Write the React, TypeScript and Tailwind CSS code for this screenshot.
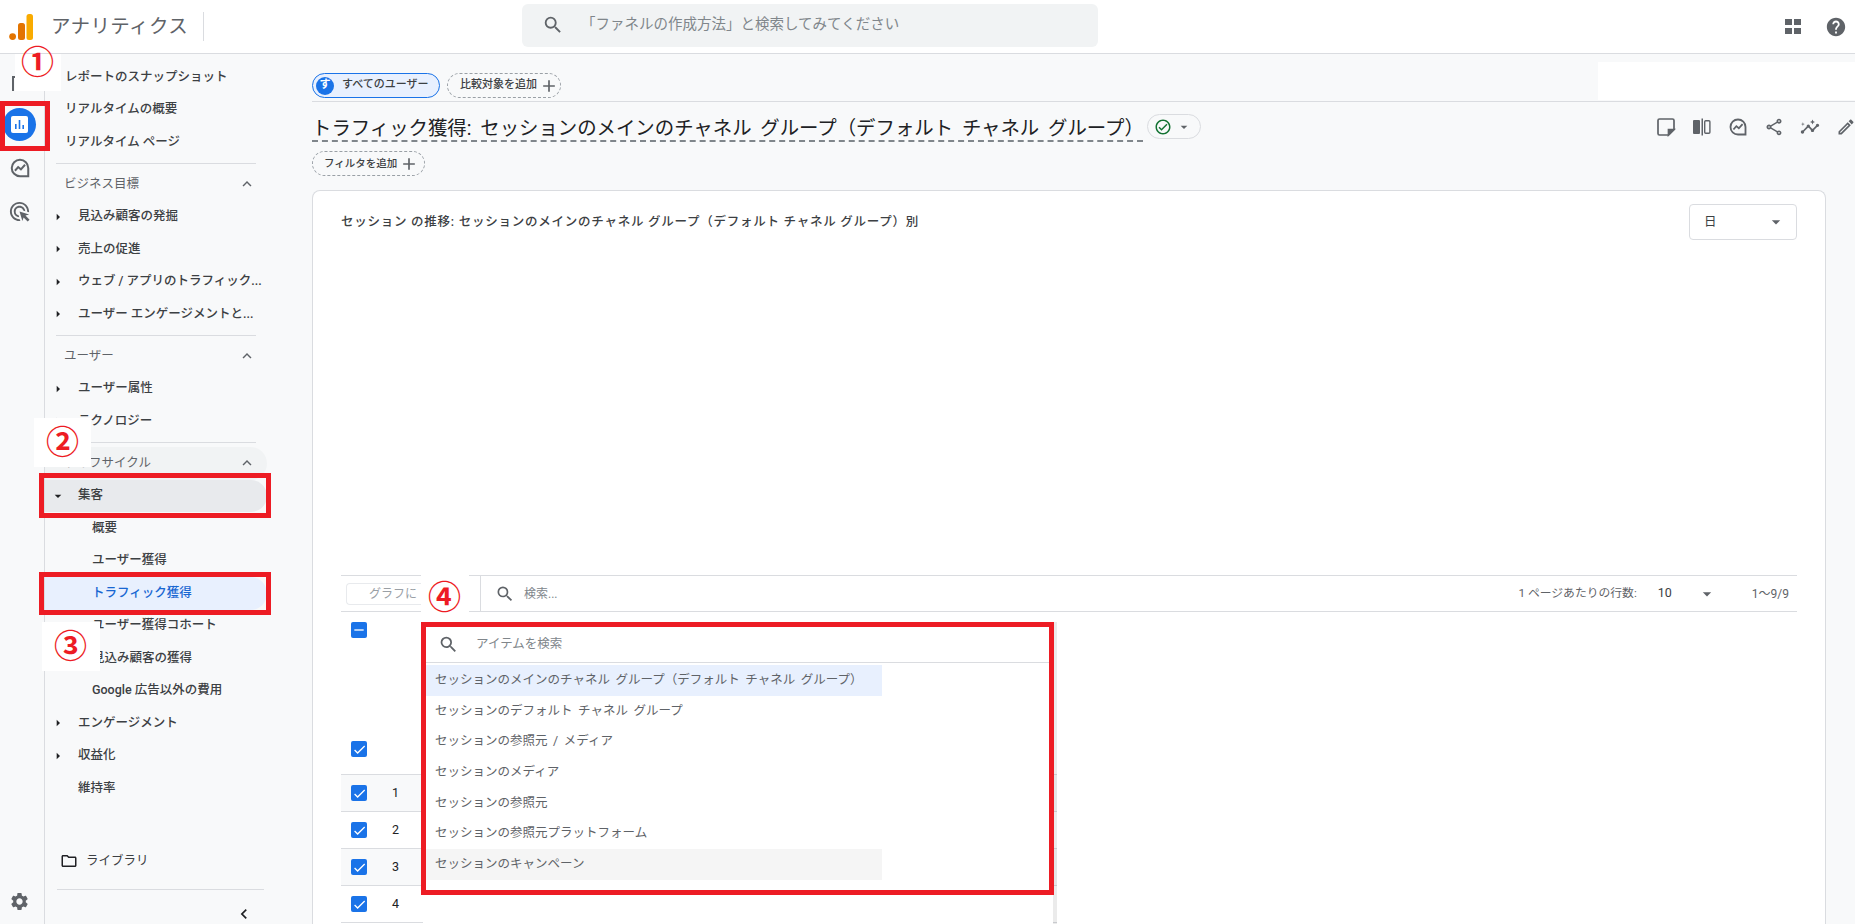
import React from "react";
import {
    MdAdd,
    MdArrowDropDown,
    MdArrowRight,
    MdCheck,
    MdChevronLeft,
    MdExpandLess,
    MdHelp,
    MdOutlineAdsClick,
    MdOutlineCheckCircle,
    MdOutlineEdit,
    MdOutlineFolder,
    MdOutlineInsights,
    MdOutlineShare,
    MdRemove,
    MdSearch,
    MdSettings,
} from "react-icons/md";

const FONT = "[font-family:Roboto,'Noto_Sans_CJK_JP',sans-serif]";

const dropdownItems = [
    "セッションのメインのチャネル グループ（デフォルト チャネル グループ）",
    "セッションのデフォルト チャネル グループ",
    "セッションの参照元 / メディア",
    "セッションのメディア",
    "セッションの参照元",
    "セッションの参照元プラットフォーム",
    "セッションのキャンペーン",
];

function ExploreIcon({ size = 20 }: { size?: number }) {
    return (
        <svg width={size} height={size} viewBox="0 0 24 24" fill="none" stroke="#5f6368" strokeWidth="2.2">
            <path d="M12 3a9 9 0 1 0 0 18h9v-9a9 9 0 0 0-9-9Z" />
            <path d="M6.5 15l3.5-4 3 2.5 4.5-5" />
        </svg>
    );
}

function SideRow({ label, arrow, indent = "pl-[20px]" }: { label: string; arrow?: "right" | "down"; indent?: string }) {
    return (
        <div className={`relative flex h-[32.5px] items-center text-[12.5px] font-medium text-[#3c4043] whitespace-nowrap ${indent}`}>
            {arrow === "right" && <MdArrowRight className="absolute left-[5px] text-[#202124]" size={16} />}
            {arrow === "down" && <MdArrowDropDown className="absolute left-[5px] text-[#202124]" size={16} />}
            {label}
        </div>
    );
}

function SectionHeader({ label, hover }: { label: string; hover?: boolean }) {
    return (
        <div className={`flex h-[32.5px] items-center justify-between pl-[19px] pr-[11px] text-[12.5px] font-normal text-[#5f6368] rounded-r-full ${hover ? "bg-[#f1f3f4]" : ""}`}>
            <span>{label}</span>
            <MdExpandLess size={18} className="text-[#5f6368]" />
        </div>
    );
}

function Divider() {
    return <div className="my-[4.25px] ml-[11px] mr-[11px] h-px bg-[#dadce0]" />;
}

function Sidebar() {
    return (
        <aside className="relative flex w-[267px] shrink-0 flex-col pt-[7px]">
            <div className="w-[222px]">
                <SideRow label="レポートのスナップショット" />
                <SideRow label="リアルタイムの概要" />
                <SideRow label="リアルタイム ページ" />
                <Divider />
                <SectionHeader label="ビジネス目標" />
                <SideRow label="見込み顧客の発掘" arrow="right" indent="pl-[33px]" />
                <SideRow label="売上の促進" arrow="right" indent="pl-[33px]" />
                <SideRow label="ウェブ / アプリのトラフィック..." arrow="right" indent="pl-[33px]" />
                <SideRow label="ユーザー エンゲージメントと..." arrow="right" indent="pl-[33px]" />
                <Divider />
                <SectionHeader label="ユーザー" />
                <SideRow label="ユーザー属性" arrow="right" indent="pl-[33px]" />
                <SideRow label="テクノロジー" arrow="right" indent="pl-[33px]" />
                <Divider />
                <SectionHeader label="ライフサイクル" hover />
                <div className="rounded-r-full bg-[#e8eaed]">
                    <SideRow label="集客" arrow="down" indent="pl-[33px]" />
                </div>
                <SideRow label="概要" indent="pl-[47px]" />
                <SideRow label="ユーザー獲得" indent="pl-[47px]" />
                <div className="rounded-r-full bg-[#e8f0fe] [&>div]:text-[#1967d2]">
                    <SideRow label="トラフィック獲得" indent="pl-[47px]" />
                </div>
                <SideRow label="ユーザー獲得コホート" indent="pl-[47px]" />
                <SideRow label="見込み顧客の獲得" indent="pl-[47px]" />
                <SideRow label="Google 広告以外の費用" indent="pl-[47px]" />
                <SideRow label="エンゲージメント" arrow="right" indent="pl-[33px]" />
                <SideRow label="収益化" arrow="right" indent="pl-[33px]" />
                <SideRow label="維持率" indent="pl-[33px]" />
            </div>
            <div className="mt-[46px] flex h-[30px] w-[222px] items-center gap-[8px] pl-[15px] text-[12.5px] font-normal text-[#3c4043]">
                <MdOutlineFolder size={18} className="text-[#202124]" />
                <span>ライブラリ</span>
            </div>
            <div className="ml-[12px] mt-[18px] h-px w-[207px] bg-[#dadce0]" />
            <div className="ml-[189px] mt-[14px]">
                <MdChevronLeft size={20} className="text-[#202124]" />
            </div>
        </aside>
    );
}

function Check({ kind = "check" }: { kind?: "check" | "minus" }) {
    return (
        <div className="flex h-4 w-4 items-center justify-center rounded-[2px] bg-[#1a73e8] text-white">
            {kind === "check" ? <MdCheck size={15} /> : <MdRemove size={16} />}
        </div>
    );
}

function TableRow({ n, shaded }: { n: number; shaded?: boolean }) {
    return (
        <div className={`flex h-[37px] items-center border-b border-[#dadce0] pl-[10px] ${shaded ? "bg-[#f8f9fa]" : "bg-white"}`}>
            <Check />
            <span className="ml-[25px] text-[12.5px] text-[#202124]">{n}</span>
        </div>
    );
}

function Annotation({ className, glyph, glyphClass }: { className: string; glyph: string; glyphClass: string }) {
    return (
        <div className={`absolute bg-white ${className}`}>
            <span className={`absolute text-[33px] leading-none font-bold text-[#ed1c24] ${glyphClass}`}>{glyph}</span>
        </div>
    );
}

export default function App() {
    return (
        <div className={`relative flex h-screen w-full flex-col overflow-hidden bg-[#f8f9fa] ${FONT}`}>
            <header className="flex h-[54px] shrink-0 items-center border-b border-[#dadce0] bg-white">
                <div className="flex w-[522px] shrink-0 items-center">
                    <svg className="ml-[9px]" width="24" height="28" viewBox="0 0 24 28">
                        <circle cx="3.6" cy="23.6" r="3.4" fill="#e37400" />
                        <rect x="9" y="10" width="7" height="17" rx="2.5" fill="#e37400" />
                        <rect x="17.5" y="1" width="6.5" height="26" rx="2.5" fill="#f9ab00" />
                    </svg>
                    <span className="ml-[18px] text-[19.5px] tracking-[0.4px] text-[#5f6368]">アナリティクス</span>
                    <div className="ml-[15px] h-[29px] w-px bg-[#dadce0]" />
                </div>
                <div className="mb-[3px] flex h-[43px] w-[576px] items-center rounded-md bg-[#f1f3f4] pl-[20px]">
                    <MdSearch size={22} className="text-[#5f6368]" />
                    <span className="ml-[17px] text-[14.5px] text-[#80868b]">「ファネルの作成方法」と検索してみてください</span>
                </div>
                <div className="ml-auto flex items-center pr-[8px]">
                    <div className="grid grid-cols-2 gap-[2.5px]">
                        <div className="h-[6.5px] w-[7px] bg-[#5f6368]" />
                        <div className="h-[6.5px] w-[7px] bg-[#5f6368]" />
                        <div className="h-[6.5px] w-[7px] bg-[#5f6368]" />
                        <div className="h-[6.5px] w-[7px] bg-[#5f6368]" />
                    </div>
                    <MdHelp size={22} className="ml-[24px] text-[#5f6368]" />
                </div>
            </header>

            <div className="flex min-h-0 flex-1">
                <nav className="flex w-[45px] shrink-0 flex-col items-center border-r border-[#dadce0] pr-[5px]">
                    <div className="mt-[22px] h-[15px] w-[15px] border-2 border-b-0 border-[#5f6368]" />
                    <div className="mt-[17px] flex h-[33px] w-[33px] items-center justify-center rounded-full bg-[#1a73e8]">
                        <svg width="17" height="17" viewBox="0 0 17 17">
                            <rect width="17" height="17" rx="2" fill="#fff" />
                            <rect x="4" y="8" width="1.6" height="5" fill="#1a73e8" />
                            <rect x="7.7" y="4" width="1.6" height="9" fill="#1a73e8" />
                            <rect x="11.4" y="9" width="1.6" height="4" fill="#1a73e8" />
                        </svg>
                    </div>
                    <div className="mt-[16px] h-[22px]"><ExploreIcon size={22} /></div>
                    <MdOutlineAdsClick size={23} className="mt-[21px] text-[#5f6368]" />
                    <MdSettings size={21} className="mt-auto mb-[12px] text-[#5f6368]" />
                </nav>

                <Sidebar />

                <main className="flex min-w-0 flex-1 flex-col">
                    <div className="flex h-[48px] shrink-0 items-end gap-[7px] border-b border-[#dadce0] pb-[3px]">
                        <div className="flex h-[25px] w-[128px] items-center rounded-full border border-[#1a73e8] bg-[#e8f0fe] pl-[3px] text-[11px] font-medium text-[#3c4043]">
                            <span className="flex h-[18px] w-[18px] items-center justify-center rounded-full bg-[#1a73e8] text-[11px] font-bold text-white">す</span>
                            <span className="ml-[8px]">すべてのユーザー</span>
                        </div>
                        <div className="flex h-[25px] w-[114px] items-center rounded-full border border-dashed border-[#9aa0a6] pl-[12px] text-[11px] font-medium text-[#3c4043]">
                            比較対象を追加
                            <MdAdd size={20} className="ml-[2px] text-[#5f6368]" />
                        </div>
                    </div>

                    <div className="flex h-[49px] shrink-0 items-center justify-between">
                        <div className="flex items-center">
                            <h1 className="w-[831px] whitespace-nowrap border-b-2 border-dashed border-[#80868b] pt-[6px] text-[19.4px] leading-[22px] font-normal text-[#202124] [word-spacing:4px]">
                                トラフィック獲得: セッションのメインのチャネル グループ（デフォルト チャネル グループ）
                            </h1>
                            <div className="ml-[4px] flex h-[25px] w-[54px] items-center rounded-full border border-[#dadce0] pl-[6px]">
                                <MdOutlineCheckCircle size={18} className="text-[#137333]" />
                                <MdArrowDropDown size={16} className="ml-[4px] text-[#5f6368]" />
                            </div>
                        </div>
                        <div className="flex items-center gap-[16px] text-[#5f6368]">
                            <svg width="20" height="20" viewBox="0 0 20 20" fill="none" stroke="#5f6368" strokeWidth="1.7">
                                <path d="M18 12.5V3.5a1.5 1.5 0 0 0-1.5-1.5h-13A1.5 1.5 0 0 0 2 3.5v13A1.5 1.5 0 0 0 3.5 18h9Z" />
                                <path d="M18 12.5h-5.5V18Z" fill="#5f6368" />
                            </svg>
                            <svg width="20" height="20" viewBox="0 0 20 20" fill="#5f6368">
                                <rect x="1" y="3" width="7" height="14" rx="1" />
                                <rect x="9.5" y="1.5" width="1.5" height="17" />
                                <rect x="12.7" y="3.7" width="5.2" height="12.6" rx="1" fill="none" stroke="#5f6368" strokeWidth="1.4" />
                            </svg>
                            <ExploreIcon size={20} />
                            <MdOutlineShare size={20} />
                            <MdOutlineInsights size={20} />
                            <MdOutlineEdit size={20} className="mr-[-1px]" />
                        </div>
                    </div>

                    <div className="shrink-0">
                        <div className="flex h-[25px] w-[113px] items-center rounded-full border border-dashed border-[#9aa0a6] pl-[11px] text-[10.5px] font-medium text-[#3c4043]">
                            フィルタを追加
                            <MdAdd size={20} className="ml-[2px] text-[#5f6368]" />
                        </div>
                    </div>

                    <section className="mr-[29px] mt-[14px] flex min-h-0 flex-1 flex-col rounded-t-lg border border-b-0 border-[#dadce0] bg-white px-[28px]">
                        <div className="flex h-[384px] shrink-0 items-start justify-between pt-[13px]">
                            <p className="mt-[9px] text-[12.5px] tracking-[0.75px] font-medium text-[#3c4043]">
                                セッション の推移: セッションのメインのチャネル グループ（デフォルト チャネル グループ）別
                            </p>
                            <div className="flex h-[36px] w-[108px] items-center justify-between rounded border border-[#dadce0] pl-[14px] pr-[10px] text-[12.5px] text-[#3c4043]">
                                日
                                <MdArrowDropDown size={20} className="text-[#5f6368]" />
                            </div>
                        </div>

                        <div className="flex h-[37px] shrink-0 items-center border-y border-[#dadce0]">
                            <div className="flex h-full w-[140px] items-center border-r border-[#dadce0] pl-[5px]">
                                <div className="h-[22px] w-[75px] whitespace-nowrap rounded-l border border-r-0 border-[#e8eaed] pl-[22px] text-[12px] leading-[20px] text-[#9aa0a6]">グラフに</div>
                            </div>
                            <MdSearch size={20} className="ml-[14px] text-[#5f6368]" />
                            <span className="ml-[9px] text-[12px] text-[#80868b]">検索...</span>
                            <span className="ml-auto text-[11.8px] text-[#5f6368]">1 ページあたりの行数:</span>
                            <span className="ml-[21px] text-[12.5px] text-[#3c4043]">10</span>
                            <MdArrowDropDown size={20} className="ml-[25px] text-[#5f6368]" />
                            <span className="ml-[35px] mr-[8px] text-[12px] text-[#5f6368]">1〜9/9</span>
                        </div>

                        <div className="w-[716px] shrink-0">
                            <div className="flex h-[163px] flex-col justify-between border-b border-[#dadce0] pb-[17px] pl-[10px] pt-[10px]">
                                <Check kind="minus" />
                                <Check />
                            </div>
                            <TableRow n={1} shaded />
                            <TableRow n={2} />
                            <TableRow n={3} shaded />
                            <TableRow n={4} />
                        </div>
                    </section>
                </main>
            </div>

            {/* 枠線の上に重なるドロップダウン */}
            <div className="absolute bottom-0 left-[423px] top-[622px] w-[630px] bg-white">
                <div className="flex h-[41px] items-center border-b border-[#dadce0] pl-[15px] pt-[4px]">
                    <MdSearch size={21} className="text-[#5f6368]" />
                    <span className="ml-[17px] text-[12.5px] text-[#80868b]">アイテムを検索</span>
                </div>
                <ul className="mt-px w-[459px] pt-px">
                    {dropdownItems.map((item, i) => (
                        <li
                            key={item}
                            className={`flex h-[30.7px] items-center whitespace-nowrap pl-[12px] text-[12.5px] text-[#5f6368] [word-spacing:2.5px] ${i === 0 ? "bg-[#e8f0fe]" : ""} ${i === 6 ? "bg-[#f5f5f5]" : ""}`}
                        >
                            {item}
                        </li>
                    ))}
                </ul>
            </div>
            <div className="absolute bottom-0 left-[1053px] top-[622px] w-[4px] bg-black/[0.08]" />

            {/* 注釈 */}
            <Annotation className="left-[15px] top-[54px] h-[37px] w-[46px]" glyph="①" glyphClass="left-[6px] top-[-8px]" />
            <Annotation className="left-[34px] top-[418px] h-[49px] w-[57px]" glyph="②" glyphClass="left-[12px] top-[8px]" />
            <Annotation className="left-[42px] top-[622px] h-[49px] w-[58px]" glyph="③" glyphClass="left-[12px] top-[8px]" />
            <Annotation className="left-[421px] top-[575px] h-[47px] w-[48px]" glyph="④" glyphClass="left-[7px] top-[6px]" />
            <div className="absolute left-[1598px] top-[62px] h-[38px] w-[257px] bg-white" />
            <div className="absolute left-0 top-[101px] h-[50px] w-[50px] border-[5px] border-[#ed1c24]" />
            <div className="absolute left-[39px] top-[473px] h-[45px] w-[232px] border-[5px] border-[#ed1c24]" />
            <div className="absolute left-[39px] top-[572px] h-[43px] w-[232px] border-[5px] border-[#ed1c24]" />
            <div className="absolute left-[421px] top-[622px] h-[273px] w-[633px] border-[5px] border-[#ed1c24]" />
        </div>
    );
}
